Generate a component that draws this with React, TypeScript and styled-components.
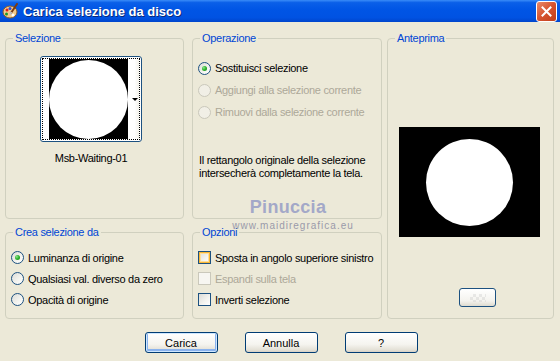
import { FunctionComponent } from 'react'
import styled, { createGlobalStyle, css } from 'styled-components'

const GlobalStyle = createGlobalStyle`
  body {
    margin: 0;
    background: #ece9d8;
    overflow: hidden;
  }
`

const Window = styled.div`
  position: relative;
  width: 560px;
  height: 361px;
  background: #ece9d8;
  font-family: 'Liberation Sans', Arial, sans-serif;
  font-size: 11px;
  letter-spacing: -0.3px;
  color: #000;
  overflow: hidden;
`

const TitleBar = styled.div`
  height: 22px;
  display: flex;
  align-items: center;
  padding: 0 3px 0 2px;
  background: linear-gradient(
    to bottom,
    #3a8cf8 0%,
    #0a5fe8 12%,
    #0055e5 45%,
    #0052e2 80%,
    #0045cc 100%
  );
`

const Title = styled.span`
  flex: 1;
  margin-left: 4px;
  font-family: 'Liberation Sans', Arial, sans-serif;
  font-weight: bold;
  font-size: 13px;
  letter-spacing: 0;
  color: #fff;
  text-shadow: 1px 1px 0 #0a2a7a;
`

const CloseButton = styled.div`
  width: 19px;
  height: 19px;
  border: 1px solid #fff;
  border-radius: 3px;
  background: linear-gradient(135deg, #e88a6a 0%, #d6532f 50%, #c03e1a 100%);
  display: flex;
  align-items: center;
  justify-content: center;
`

const Body = styled.div`
  padding: 10px 6px 0 5px;
`

const Main = styled.div`
  display: flex;
  gap: 5px;
`

const LeftGrid = styled.div`
  display: grid;
  grid-template-columns: 179px 190px;
  grid-template-rows: 187px 93px;
  column-gap: 8px;
  row-gap: 7px;
`

const Group = styled.fieldset<{ $width?: number; $height?: number }>`
  margin: 0;
  padding: 0 5px;
  min-width: 0;
  box-sizing: border-box;
  border: 1px solid #d0d0bf;
  border-radius: 4px;
  ${p => p.$width && css`width: ${p.$width}px;`}
  ${p => p.$height && css`height: ${p.$height}px;`}
`

const Legend = styled.legend`
  margin-left: 2px;
  padding: 0 2px;
  font-size: 11px;
  line-height: 13px;
  color: #0046d5;
`

const ThumbArea = styled.div`
  display: flex;
  flex-direction: column;
  align-items: center;
  width: 102px;
  margin: 11px 0 0 29px;
`

const ThumbButton = styled.div`
  width: 102px;
  height: 86px;
  box-sizing: border-box;
  border: 1px solid #1c5180;
  border-radius: 3px;
  padding: 1px;
  background: #fff;
`

const FocusRing = styled.div`
  height: 100%;
  box-sizing: border-box;
  border: 1px dotted #000;
  display: flex;
  align-items: center;
  padding-left: 6px;
`

const ThumbImage = styled.div`
  width: 79px;
  height: 80px;
  background: #000;
  display: flex;
  align-items: center;
  justify-content: center;
`

const Disc = styled.div<{ $size: number }>`
  width: ${p => p.$size}px;
  height: ${p => p.$size}px;
  border-radius: 50%;
  background: #fff;
`

const ArrowStrip = styled.div`
  flex: 1;
  align-self: stretch;
  display: flex;
  align-items: center;
  justify-content: flex-end;
  padding-right: 1px;
  background: linear-gradient(to right, #fff 0%, #fff 60%, #f2f1ea 100%);
`

const Arrow = styled.div`
  width: 0;
  height: 0;
  border-left: 3px solid transparent;
  border-right: 3px solid transparent;
  border-top: 3px solid #000;
`

const ThumbLabel = styled.div`
  margin-top: 10px;
  font-size: 11px;
  line-height: 13px;
  white-space: nowrap;
`

const OptionList = styled.div<{ $top: number }>`
  display: flex;
  flex-direction: column;
  padding-top: ${p => p.$top}px;
`

const OptionRow = styled.div<{ $disabled?: boolean; $h: number }>`
  height: ${p => p.$h}px;
  display: flex;
  align-items: center;
  gap: 4px;
  white-space: nowrap;
  color: ${p => (p.$disabled ? '#aca899' : '#000')};
`

const Radio = styled.span<{ $checked?: boolean; $disabled?: boolean }>`
  width: 13px;
  height: 13px;
  box-sizing: border-box;
  border-radius: 50%;
  flex: none;
  display: flex;
  align-items: center;
  justify-content: center;
  border: 1px solid ${p => (p.$disabled ? '#cac8bb' : '#1c5180')};
  background: ${p =>
    p.$disabled ? '#f1efe6' : 'linear-gradient(135deg, #dcdcd7 0%, #f4f4f0 60%, #ffffff 100%)'};
  ${p =>
    p.$checked &&
    css`
      &::after {
        content: '';
        width: 5px;
        height: 5px;
        border-radius: 50%;
        background: radial-gradient(circle at 35% 35%, #8ee58e 0%, #29b029 50%, #1a861a 100%);
      }
    `}
`

const Checkbox = styled.span<{ $hover?: boolean; $disabled?: boolean }>`
  width: 13px;
  height: 13px;
  box-sizing: border-box;
  flex: none;
  border: 1px solid ${p => (p.$disabled ? '#cac8bb' : '#1c5180')};
  background: ${p =>
    p.$disabled ? '#f7f6f1' : 'linear-gradient(135deg, #dcdcd7 0%, #f4f4f0 60%, #ffffff 100%)'};
  ${p =>
    p.$hover &&
    css`
      box-shadow: inset 0 0 0 1px #f8b636, inset 0 0 0 2px #fedf9c;
    `}
`

const Note = styled.p`
  margin: 31px 0 0 1px;
  line-height: 13px;
  white-space: nowrap;
`

const PreviewArea = styled.div`
  display: flex;
  flex-direction: column;
  align-items: flex-start;
  padding: 82px 0 0 6px;
`

const PreviewImage = styled.div`
  width: 141px;
  height: 110px;
  background: #000;
  display: flex;
  align-items: center;
  justify-content: center;
`

const SmallButton = styled.div`
  width: 37px;
  height: 19px;
  box-sizing: border-box;
  margin: 51px 0 0 60px;
  border: 1px solid #1c5180;
  border-radius: 3px;
  background: linear-gradient(to bottom, #ffffff 0%, #f4f3ee 70%, #dedbcf 100%);
  display: flex;
  align-items: center;
  justify-content: center;
`

const Checker = styled.div`
  width: 16px;
  height: 8px;
  opacity: 0.35;
  background-image: linear-gradient(45deg, #c8c8c8 25%, transparent 25%, transparent 75%, #c8c8c8 75%),
    linear-gradient(45deg, #c8c8c8 25%, transparent 25%, transparent 75%, #c8c8c8 75%);
  background-size: 6px 6px;
  background-position: 0 0, 3px 3px;
`

const ButtonRow = styled.div`
  display: flex;
  justify-content: center;
  gap: 27px;
  margin-top: 13px;
  padding-left: 3px;
`

const Button = styled.div<{ $default?: boolean }>`
  width: 73px;
  height: 21px;
  box-sizing: border-box;
  border: 1px solid #003c74;
  border-radius: 3px;
  display: flex;
  align-items: center;
  justify-content: center;
  letter-spacing: 0;
  background: linear-gradient(to bottom, #ffffff 0%, #f5f4ef 60%, #e3e0d5 90%, #d6d0c5 100%);
  ${p =>
    p.$default &&
    css`
      box-shadow: inset 0 0 0 1px #cee7ff, inset 0 -1px 0 2px #8bb3ee;
    `}
`

const Watermark = styled.div`
  position: absolute;
  left: 232px;
  top: 197px;
  width: 122px;
  display: flex;
  flex-direction: column;
  align-items: center;
  pointer-events: none;
`

const WatermarkName = styled.span`
  font-family: 'Liberation Sans', sans-serif;
  font-weight: bold;
  font-size: 18px;
  line-height: 20px;
  letter-spacing: 0.3px;
  color: #a3a8c8;
  margin-left: -10px;
`

const WatermarkUrl = styled.span`
  margin-top: 3px;
  font-family: 'Liberation Sans', sans-serif;
  font-size: 10px;
  line-height: 11px;
  letter-spacing: 1px;
  color: #9a9aaa;
`

const AppIcon: FunctionComponent = () => (
  <svg width="17" height="17" viewBox="0 0 17 17">
    <ellipse cx="8" cy="9" rx="7" ry="6" fill="#f2c98a" stroke="#8a5a2a" strokeWidth="1" />
    <circle cx="5" cy="7" r="1.5" fill="#e0201a" />
    <circle cx="8" cy="5.5" r="1.5" fill="#2a4fe0" />
    <circle cx="4.5" cy="11" r="1.5" fill="#1e9a2a" />
    <circle cx="11" cy="12" r="1.5" fill="#ffffff" />
    <path d="M15 1 L9 10" stroke="#7a3b12" strokeWidth="2" strokeLinecap="round" />
    <path d="M9.5 9 L8 11.5" stroke="#c0c0c0" strokeWidth="2" />
  </svg>
)

const CloseIcon: FunctionComponent = () => (
  <svg width="11" height="11" viewBox="0 0 11 11">
    <path d="M1.5 1.5 L9.5 9.5 M9.5 1.5 L1.5 9.5" stroke="#fff" strokeWidth="2" strokeLinecap="square" />
  </svg>
)

export default function App() {
  return (
    <Window>
      <GlobalStyle />
      <TitleBar>
        <AppIcon />
        <Title>Carica selezione da disco</Title>
        <CloseButton>
          <CloseIcon />
        </CloseButton>
      </TitleBar>

      <Body>
        <Main>
          <LeftGrid>
            <Group>
              <Legend>Selezione</Legend>
              <ThumbArea>
                <ThumbButton>
                  <FocusRing>
                    <ThumbImage>
                      <Disc $size={79} />
                    </ThumbImage>
                    <ArrowStrip>
                      <Arrow />
                    </ArrowStrip>
                  </FocusRing>
                </ThumbButton>
                <ThumbLabel>Msb-Waiting-01</ThumbLabel>
              </ThumbArea>
            </Group>

            <Group>
              <Legend>Operazione</Legend>
              <OptionList $top={12}>
                <OptionRow $h={22}>
                  <Radio $checked />
                  Sostituisci selezione
                </OptionRow>
                <OptionRow $h={22} $disabled>
                  <Radio $disabled />
                  Aggiungi alla selezione corrente
                </OptionRow>
                <OptionRow $h={22} $disabled>
                  <Radio $disabled />
                  Rimuovi dalla selezione corrente
                </OptionRow>
              </OptionList>
              <Note>
                Il rettangolo originale della selezione
                <br />
                intersecherà completamente la tela.
              </Note>
            </Group>

            <Group>
              <Legend>Crea selezione da</Legend>
              <OptionList $top={8}>
                <OptionRow $h={21}>
                  <Radio $checked />
                  Luminanza di origine
                </OptionRow>
                <OptionRow $h={21}>
                  <Radio />
                  Qualsiasi val. diverso da zero
                </OptionRow>
                <OptionRow $h={21}>
                  <Radio />
                  Opacità di origine
                </OptionRow>
              </OptionList>
            </Group>

            <Group>
              <Legend>Opzioni</Legend>
              <OptionList $top={8}>
                <OptionRow $h={21}>
                  <Checkbox $hover />
                  Sposta in angolo superiore sinistro
                </OptionRow>
                <OptionRow $h={21} $disabled>
                  <Checkbox $disabled />
                  Espandi sulla tela
                </OptionRow>
                <OptionRow $h={21}>
                  <Checkbox />
                  Inverti selezione
                </OptionRow>
              </OptionList>
            </Group>
          </LeftGrid>

          <Group $width={167} $height={287}>
            <Legend>Anteprima</Legend>
            <PreviewArea>
              <PreviewImage>
                <Disc $size={87} />
              </PreviewImage>
              <SmallButton>
                <Checker />
              </SmallButton>
            </PreviewArea>
          </Group>
        </Main>

        <ButtonRow>
          <Button $default>Carica</Button>
          <Button>Annulla</Button>
          <Button>?</Button>
        </ButtonRow>
      </Body>

      <Watermark>
        <WatermarkName>Pinuccia</WatermarkName>
        <WatermarkUrl>www.maidiregrafica.eu</WatermarkUrl>
      </Watermark>
    </Window>
  )
}
